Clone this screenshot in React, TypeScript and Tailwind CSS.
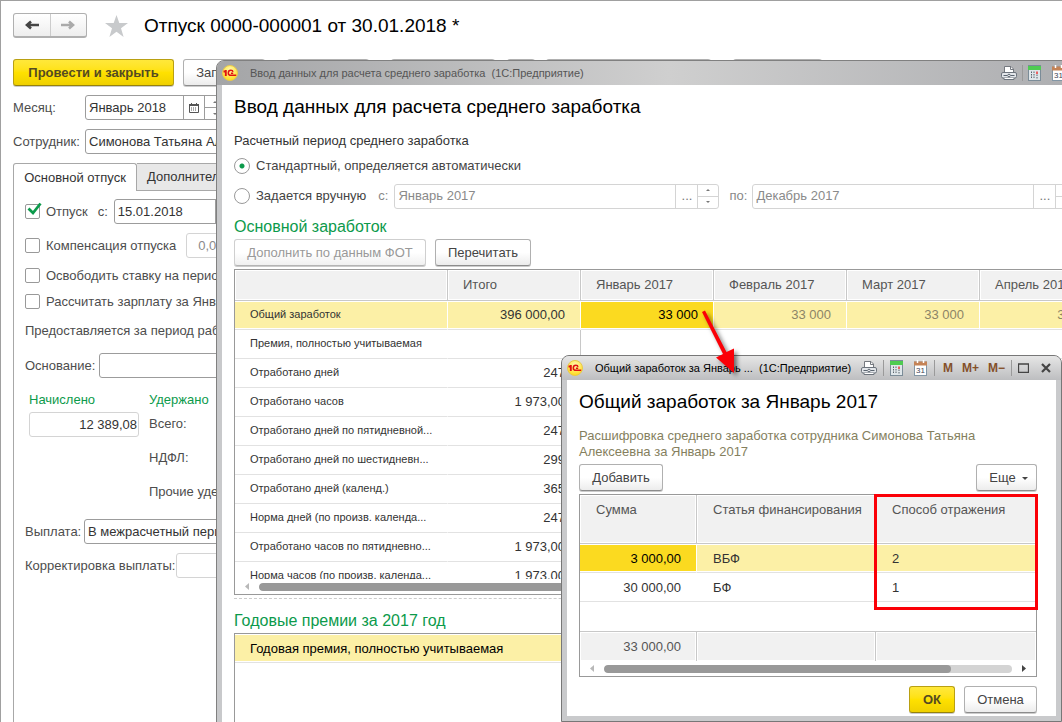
import React from 'react';

type FieldProps = {
  id: string;
  label?: string;
  value: string;
  className?: string;
  inputClassName?: string;
  disabled?: boolean;
  children?: React.ReactNode;
};

// Text box with optional trailing buttons inside the same frame
const Field = ({ id, label, value, className = '', inputClassName = '', disabled, children }: FieldProps) => (
  <div
    className={`flex h-[25px] shrink-0 overflow-hidden rounded-[3px] border bg-white ${
      disabled ? 'border-[#d4d4d4] text-[#8a8a8a]' : 'border-[#9c9c9c] text-[#333]'
    } ${className}`}
  >
    <input
      id={id}
      aria-label={label}
      defaultValue={value}
      readOnly={disabled}
      className={`min-w-0 flex-1 bg-transparent px-[3px] outline-none ${inputClassName}`}
    />
    {children}
  </div>
);

const Spinner = ({ light }: { light?: boolean }) => (
  <span className={`flex w-[21px] flex-col border-l ${light ? 'border-[#d4d4d4]' : 'border-[#9c9c9c]'}`}>
    <button aria-label="Больше" className={`flex flex-1 items-center justify-center border-b ${light ? 'border-[#d4d4d4]' : 'border-[#9c9c9c]'}`}>
      <svg width="4" height="2" viewBox="0 0 4 2"><path d="M0 2 2 0l2 2z" fill="#777" /></svg>
    </button>
    <button aria-label="Меньше" className="flex flex-1 items-center justify-center">
      <svg width="4" height="2" viewBox="0 0 4 2"><path d="M0 0l2 2 2-2z" fill="#777" /></svg>
    </button>
  </span>
);

const PickButton = () => (
  <button className="w-[22px] border-l border-[#d4d4d4] text-[#777]">...</button>
);

type ButtonProps = { children?: React.ReactNode; label?: string; primary?: boolean; disabled?: boolean; className?: string };

const Button = ({ children, label, primary, disabled, className = '' }: ButtonProps) => {
  let look = 'border-[#b0b0b0] border-b-[#8c8c8c] bg-linear-to-b from-white from-50% to-[#ececec] text-[#444]';
  if (primary) look = 'border-[#b9a012] border-b-[#96820c] bg-linear-to-b from-[#ffe83a] via-[#ffe100] to-[#efd000] font-bold text-[#544a22]';
  if (disabled) look = 'border-[#cfcfcf] border-b-[#b4b4b4] bg-linear-to-b from-white from-50% to-[#f0f0f0] text-[#999]';
  return (
    <button
      disabled={disabled}
      aria-label={label}
      className={`flex h-[27px] shrink-0 items-center justify-center rounded-[3px] border pt-px whitespace-nowrap shadow-[0_1px_0_#ccc] ${look} ${className}`}
    >
      {children}
    </button>
  );
};

const CheckBox = ({ label, checked }: { label: string; checked?: boolean }) => (
  <label className="flex shrink-0 items-center gap-1.5 whitespace-nowrap">
    <span className="relative flex size-[15px]">
      <input
        type="checkbox"
        defaultChecked={checked}
        className="size-[15px] appearance-none rounded-[2px] border border-[#999] bg-white"
      />
      {checked && (
        <svg className="pointer-events-none absolute -top-0.5 left-0.5" width="16" height="15" viewBox="0 0 16 15">
          <path d="M1.500 6.500 6 11 13.500 1.500" fill="none" stroke="#0c9a4b" strokeWidth="2.800" />
        </svg>
      )}
    </span>
    {label}
  </label>
);

const Radio = ({ label, checked }: { label: string; checked?: boolean }) => (
  <label className="flex shrink-0 items-center gap-1.5 whitespace-nowrap text-[#444]">
    <input
      type="radio"
      name="period"
      defaultChecked={checked}
      className="size-4 appearance-none rounded-full border border-[#999] bg-white checked:bg-[radial-gradient(circle,#0c9a4b_2px,#fff_3px)]"
    />
    {label}
  </label>
);

const Logo = () => (
  <svg className="shrink-0" width="16" height="16" viewBox="0 0 16 16">
    <defs>
      <radialGradient id="sun" cx="0.5" cy="0.3" r="0.7">
        <stop offset="0" stopColor="#fffbb0" />
        <stop offset="1" stopColor="#ffd91a" />
      </radialGradient>
    </defs>
    <circle cx="8" cy="8" r="7.500" fill="url(#sun)" stroke="#e8c84a" />
    <path d="M1.500 6.500h1.800M3.800 5v6" fill="none" stroke="#e01010" strokeWidth="1.900" />
    <path d="M11 6.900C10.800 5.800 9.900 5.300 8.900 5.300 7.300 5.300 6.300 6.500 6.300 7.900 6.300 9.400 7.400 10.300 8.900 10.300H14.200M11.200 8.300H8.900" fill="none" stroke="#e01010" strokeWidth="1.500" />
  </svg>
);

const PrintIcon = () => (
  <svg width="16" height="16" viewBox="0 0 16 16">
    <path d="M3.500 8V1.500H10L12.500 4v4" fill="#fff" stroke="#75797f" />
    <path d="M9.500 1.500V4.500h3" fill="none" stroke="#75797f" />
    <rect x="0.500" y="7.500" width="15" height="5.500" rx="1.500" fill="#e3e6ea" stroke="#6d747d" />
    <path d="M2.500 10.500h4M9.500 10.500h4" stroke="#5b6570" />
    <circle cx="8" cy="10.500" r="1.300" fill="#fff" stroke="#5b6570" />
    <path d="M3 13v1.500h10V13" fill="#fff" stroke="#6d747d" />
  </svg>
);

const CalculatorIcon = () => (
  <svg width="13" height="16" viewBox="0 0 13 16">
    <rect x="0.500" y="0.500" width="12" height="15" fill="#dfe6ea" stroke="#7b8c98" />
    <rect x="0" y="1" width="13" height="4" fill="#4fcb52" />
    <path d="M3.500 6.500v7M6 6.500v7" stroke="#59636b" strokeDasharray="1.500 1" />
    <path d="M9 6.500v2.500" stroke="#e33" strokeWidth="1.500" />
    <path d="M9 9.500v4" stroke="#59636b" strokeDasharray="1.500 1" />
  </svg>
);

const CalendarIcon = () => (
  <svg width="14" height="16" viewBox="0 0 14 16">
    <rect x="0.500" y="2" width="12" height="13.500" fill="#fff" stroke="#8296a5" />
    <rect x="0" y="1.500" width="13" height="4" fill="#c58356" />
    <path d="M3.500 0v3M9.500 0v3" stroke="#fff" strokeWidth="1.500" />
    <text x="6.500" y="13" textAnchor="middle" fontSize="8" fill="#445">31</text>
  </svg>
);

const Divider = () => <span className="h-4 w-px bg-[#9a9a9a]" />;

const ScrollBar = ({ children }: { children: React.ReactNode }) => (
  <div className="flex h-[15px] items-center gap-2.5 px-2.5">
    <svg width="4" height="7" viewBox="0 0 4 7"><path d="M4 0v7L0 3.500z" fill="#b8b8b8" /></svg>
    <div className="h-2 flex-1 overflow-hidden rounded-full bg-[#d4d4d4]">{children}</div>
    <svg width="4" height="7" viewBox="0 0 4 7"><path d="M0 0v7l4-3.500z" fill="#444" /></svg>
  </div>
);

const months = ['Январь 2017', 'Февраль 2017', 'Март 2017', 'Апрель 2017'];

const earnings = [
  ['Общий заработок', '396 000,00'],
  ['Премия, полностью учитываемая', ''],
  ['Отработано дней', '247'],
  ['Отработано часов', '1 973,00'],
  ['Отработано дней по пятидневной...', '247'],
  ['Отработано дней по шестидневн...', '299'],
  ['Отработано дней (календ.)', '365'],
  ['Норма дней (по произв. календа...', '247'],
  ['Отработано часов по пятидневно...', '1 973,00'],
  ['Норма часов (по произв. календа...', '1 973,00'],
];

const VacationForm = () => (
  <main className="h-full border-t border-l border-[#a0a0a0] pt-3 pl-3 text-[#4d4d4d]">
    <header className="flex h-[25px] items-center">
      <div className="flex h-[25px] w-[74px] rounded-[3px] border border-b-2 border-[#b0b0b0] bg-linear-to-b from-white to-[#eee]">
        <button aria-label="Назад" className="flex flex-1 items-center justify-center border-r border-[#ccc]">
          <svg width="14" height="12" viewBox="0 0 14 12"><path d="M14 6H3M6 2.500 2 6l4 3.500" fill="none" stroke="#444" strokeWidth="2.600" /></svg>
        </button>
        <button aria-label="Вперед" className="flex flex-1 items-center justify-center">
          <svg width="14" height="12" viewBox="0 0 14 12"><path d="M0 6h11M8 2.500 12 6 8 9.500" fill="none" stroke="#aaa" strokeWidth="2.600" /></svg>
        </button>
      </div>
      <svg className="ml-[18px]" width="23" height="22" viewBox="0 0 23 22">
        <path d="M11.500 0 14.300 8H23l-7 5.200L18.600 22l-7.100-5.300L4.400 22 7 13.200 0 8h8.700z" fill="#c8cacc" />
      </svg>
      <h1 className="ml-4 text-[19px] whitespace-nowrap text-black">Отпуск 0000-000001 от 30.01.2018 *</h1>
    </header>

    <div className="mt-[21px] flex">
      <Button primary className="w-[161px]">Провести и закрыть</Button>
      <Button className="ml-[9px] w-[82px]">Записать</Button>
      <Button label="Провести" className="ml-[22px] w-[82px]" />
      <Button label="Выплатить" className="ml-[22px] w-[104px]" />
      <Button label="Вложения" className="ml-3 w-7" />
      <Button label="Печать" className="ml-[11px] w-[165px]" />
      <Button label="Еще" className="ml-[22px] w-[89px]" />
    </div>

    <div className="mt-[9px] flex items-center">
      <label htmlFor="month" className="w-[72px]">Месяц:</label>
      <Field id="month" value="Январь 2018" className="w-[141px]">
        <button aria-label="Календарь" className="flex w-[21px] items-center justify-center border-l border-[#9c9c9c]">
          <svg width="10" height="10" viewBox="0 0 10 10">
            <path d="M.5 1.500h9v8h-9z" fill="none" stroke="#555" />
            <path d="M0 2h10" stroke="#555" strokeWidth="2" />
            <path d="M2.500 0v1M7.500 0v1" stroke="#555" />
            <path d="M2 5h6M2 7h6" stroke="#555" strokeDasharray="1 1" />
          </svg>
        </button>
        <Spinner />
      </Field>
    </div>
    <div className="mt-[9px] flex items-center">
      <label htmlFor="employee" className="w-[72px]">Сотрудник:</label>
      <Field id="employee" value="Симонова Татьяна Алексеевна" className="w-[260px]" />
    </div>

    <div className="mt-[9px] flex h-7 text-[#333]">
      <button className="w-[124px] shrink-0 rounded-t-[3px] border border-b-0 border-[#a8a8a8]">Основной отпуск</button>
      <button className="h-7 shrink-0 border border-l-0 border-[#a8a8a8] bg-[#e8e8e8] px-2.5">Дополнительно</button>
    </div>

    <section className="h-full border-l border-[#a8a8a8] pt-2 pl-[11px]">
      <div className="flex h-[25px] items-center">
        <CheckBox label="Отпуск" checked />
        <label htmlFor="from" className="mr-1.5 ml-2.5">с:</label>
        <Field id="from" value="15.01.2018" className="w-[122px]">
          <button aria-label="Выбрать дату" className="w-5 border-l border-[#9c9c9c]" />
        </Field>
      </div>
      <div className="mt-[9px] flex h-[25px] items-center">
        <CheckBox label="Компенсация отпуска" />
        <Field id="compensation" label="Дней компенсации" value="0,00" disabled className="ml-2.5 w-[60px]" inputClassName="pl-[11px]" />
      </div>
      <div className="mt-[5px] flex h-[25px] items-center"><CheckBox label="Освободить ставку на период отпуска" /></div>
      <div className="mt-px flex h-[25px] items-center"><CheckBox label="Рассчитать зарплату за Январь 2018" /></div>
      <p className="mt-[9px] h-[25px] whitespace-nowrap">Предоставляется за период работы</p>
      <div className="mt-[5px] flex items-center">
        <label htmlFor="reason" className="w-[74px]">Основание:</label>
        <Field id="reason" value="" className="w-[220px]" />
      </div>

      <div className="mt-3.5 ml-1 flex h-[109px] gap-2.5">
        <div className="w-[110px]">
          <label htmlFor="accrued" className="block h-5 text-[#0c9a4b]">Начислено</label>
          <Field id="accrued" value="12 389,08" disabled inputClassName="pr-px text-right text-[#333]" />
        </div>
        <div className="whitespace-nowrap">
          <h2 className="h-6 text-[#0c9a4b]">Удержано</h2>
          <p className="h-[34px]">Всего:</p>
          <p className="h-[34px]">НДФЛ:</p>
          <p>Прочие удержания:</p>
        </div>
      </div>

      <div className="mt-[18px] flex items-center">
        <label htmlFor="payout" className="w-[59px]">Выплата:</label>
        <Field id="payout" value="В межрасчетный период" className="w-[240px]" />
      </div>
      <div className="mt-[9px] flex items-center">
        <label htmlFor="correction" className="w-[151px] whitespace-nowrap">Корректировка выплаты:</label>
        <Field id="correction" value="" disabled className="w-[120px]" />
      </div>
    </section>
  </main>
);

const AverageWindow = () => (
  <section className="absolute top-[60px] -right-[60px] -bottom-5 left-[216px] overflow-hidden rounded-t-lg border border-[#808080] bg-[#c8c9cb] pl-[5px]">
    <div className="-ml-[5px] flex h-6 items-center bg-linear-to-r from-[#a4a5a7] via-[#cfcfcf] to-[#a9aaad] pl-[5px] text-[11px] text-[#555]">
      <Logo />
      <span className="ml-3 flex-1 whitespace-nowrap">Ввод данных для расчета среднего заработка&nbsp; (1С:Предприятие)</span>
      <div className="mr-[55px] flex items-center gap-[5px]">
        <PrintIcon />
        <Divider />
        <CalculatorIcon />
        <span className="ml-1.5"><CalendarIcon /></span>
      </div>
    </div>

    <div className="h-full bg-white pt-[11px] pl-3">
      <h1 className="h-[35px] text-[19px] leading-[22px] text-black">Ввод данных для расчета среднего заработка</h1>
      <p className="mt-0.5 h-[21px] text-[#333]">Расчетный период среднего заработка</p>
      <div className="flex h-6 items-center"><Radio label="Стандартный, определяется автоматически" checked /></div>
      <div className="mt-[5px] flex h-[26px] items-center">
        <Radio label="Задается вручную" />
        <label htmlFor="start" className="mr-1.5 ml-3 text-[#888]">с:</label>
        <Field id="start" value="Январь 2017" disabled className="w-[325px]"><PickButton /><Spinner light /></Field>
        <label htmlFor="end" className="mr-[5px] ml-2.5 text-[#888]">по:</label>
        <Field id="end" value="Декабрь 2017" disabled className="w-[325px]"><PickButton /><Spinner light /></Field>
      </div>

      <h2 className="mt-2 h-[22px] text-base leading-5 text-[#0c9a4b]">Основной заработок</h2>
      <div className="flex gap-[9px]">
        <Button disabled className="w-[192px]">Дополнить по данным ФОТ</Button>
        <Button className="w-24">Перечитать</Button>
      </div>

      <div className="mt-[3px] h-[326px] overflow-hidden border border-[#999]">
        <div className="h-[309px] overflow-hidden">
          <table className="w-[878px] table-fixed border-separate border-spacing-0">
            <colgroup>
              <col className="w-[213px]" />
              <col className="w-[133px]" />
              {months.map((m) => <col key={m} className="w-[133px]" />)}
            </colgroup>
            <thead className="text-left text-[#555]">
              <tr className="h-[31px]">
                {['', 'Итого', ...months].map((h) => (
                  <th key={h} className="border-r border-b border-[#c8c8c8] bg-[#f1f1f1] pl-[15px] font-normal shadow-[inset_0_0_0_1px_#fff]">{h}</th>
                ))}
              </tr>
            </thead>
            <tbody className="text-[#333]">
              {earnings.map(([name, total], i) => {
                const edge = i === 0 ? 'border-r-white bg-[#fcf0a6] shadow-[inset_0_1px_0_#fff,inset_0_-1px_0_#fff]' : 'border-r-transparent';
                return (
                  <tr key={name} className="h-[29px]">
                    <td className={`overflow-hidden border-r border-b border-b-[#e2e2e2] pb-0.5 pl-[15px] text-[11px] whitespace-nowrap ${edge}`}>{name}</td>
                    <td className={`border-r border-b border-b-[#e2e2e2] pr-[15px] text-right ${i === 0 ? edge : 'border-r-[#c8c8c8]'}`}>{total}</td>
                    {months.map((m, j) => (
                      <td
                        key={m}
                        className={`border-r border-b border-b-[#e2e2e2] pr-[15px] text-right ${edge} ${
                          i === 0 && j === 0 ? '!bg-[#fbda20] text-black' : 'text-[#8c8566]'
                        }`}
                      >
                        {i === 0 ? '33 000' : ''}
                      </td>
                    ))}
                  </tr>
                );
              })}
            </tbody>
          </table>
        </div>
        <ScrollBar><div className="h-2 w-4/5 rounded-full bg-[#999]" /></ScrollBar>
      </div>
      <div className="mt-[3px] border-t border-dashed border-[#ccc]" />
      <h2 className="mt-3 h-[22px] text-base leading-5 text-[#0c9a4b]">Годовые премии за 2017 год</h2>
      <table className="w-full border-separate border-spacing-0 border border-[#999] text-black">
        <tbody>
          <tr className="h-[29px]">
            <td className="border-b border-[#e2e2e2] bg-[#fcf0a6] pt-0.5 pl-[15px] shadow-[inset_0_1px_0_#fff,inset_0_-1px_0_#fff]">Годовая премия, полностью учитываемая</td>
          </tr>
          <tr className="h-32"><td /></tr>
        </tbody>
      </table>
    </div>
  </section>
);

const DetailWindow = () => (
  <section className="absolute right-0 bottom-0 flex h-[367px] w-[501px] flex-col overflow-hidden rounded-t-lg border border-[#777] bg-[#c9cacc] px-[5px] pb-[5px]">
    <div className="-mx-[5px] flex h-6 shrink-0 items-center bg-linear-to-b from-[#e6e6e6] to-[#bdbec0] px-[5px] text-[11px] text-black">
      <Logo />
      <span className="ml-3 flex-1 whitespace-nowrap">Общий заработок за Январь ...&nbsp; (1С:Предприятие)</span>
      <div className="mr-[5px] flex items-center gap-1.5">
        <PrintIcon />
        <Divider />
        <CalculatorIcon />
        <span className="ml-[5px]"><CalendarIcon /></span>
        <Divider />
        <div className="ml-0.5 flex gap-[9px] text-[12px] font-bold text-[#84502a]">
          <button>M</button>
          <button>M+</button>
          <button>M−</button>
        </div>
        <Divider />
        <button aria-label="Развернуть">
          <svg width="11" height="10" viewBox="0 0 11 10"><path d="M.5 1h10v8.500H.5zM0 1h11" fill="none" stroke="#444" strokeWidth="1.300" /></svg>
        </button>
        <button aria-label="Закрыть" className="ml-1.5">
          <svg width="10" height="10" viewBox="0 0 10 10"><path d="M1 1l8 8M9 1 1 9" stroke="#444" strokeWidth="2.200" /></svg>
        </button>
      </div>
    </div>

    <div className="flex-1 bg-white pt-2.5 pr-[19px] pl-3">
      <h1 className="text-[19px] leading-6 text-black">Общий заработок за Январь 2017</h1>
      <p className="mt-3.5 leading-4 text-[#857f5e]">
        Расшифровка среднего заработка сотрудника Симонова Татьяна
        <br />
        Алексеевна за Январь 2017
      </p>
      <div className="mt-1 flex justify-between">
        <Button className="w-[84px]">Добавить</Button>
        <Button className="w-[61px] gap-1.5 pl-1">
          Еще
          <svg width="6" height="3" viewBox="0 0 6 3"><path d="M0 0h6L3 3z" fill="#444" /></svg>
        </Button>
      </div>

      <div className="relative mt-[3px] border border-[#999]">
        <table className="w-full table-fixed border-separate border-spacing-0 text-[#333]">
          <colgroup>
            <col className="w-[117px]" />
            <col className="w-[179px]" />
            <col />
          </colgroup>
          <thead className="text-left text-[#555]">
            <tr className="h-[49px] align-top">
              {['Сумма', 'Статья финансирования', 'Способ отражения'].map((h) => (
                <th key={h} className="border-r border-b border-[#c8c8c8] bg-[#f1f1f1] pt-[7px] pl-4 font-normal whitespace-nowrap shadow-[inset_0_0_0_1px_#fff] last:border-r-0">{h}</th>
              ))}
            </tr>
          </thead>
          <tbody>
            <tr className="h-[29px] bg-[#fcf0a6]">
              <td className="border-r border-b border-r-white border-b-[#e2e2e2] bg-[#fbda20] pt-0.5 pr-[15px] text-right text-black shadow-[inset_0_1px_0_#fff,inset_0_-1px_0_#fff]">3 000,00</td>
              <td className="border-r border-b border-r-white border-b-[#e2e2e2] pt-0.5 pl-4 shadow-[inset_0_1px_0_#fff,inset_0_-1px_0_#fff]">ВБФ</td>
              <td className="border-b border-[#e2e2e2] pt-0.5 pl-4 shadow-[inset_0_1px_0_#fff,inset_0_-1px_0_#fff]">2</td>
            </tr>
            <tr className="h-[29px]">
              <td className="border-b border-[#e2e2e2] pt-0.5 pr-4 text-right">30 000,00</td>
              <td className="border-b border-[#e2e2e2] pt-0.5 pl-4">БФ</td>
              <td className="border-b border-[#e2e2e2] pt-0.5 pl-4">1</td>
            </tr>
            <tr className="h-[29px]"><td colSpan={3} /></tr>
          </tbody>
          <tfoot className="text-[#555]">
            <tr className="h-[30px]">
              <td className="border-t border-r border-[#c8c8c8] bg-[#f1f1f1] pr-[15px] text-right shadow-[inset_0_0_0_1px_#fff]">33 000,00</td>
              <td className="border-t border-r border-[#c8c8c8] bg-[#f1f1f1] shadow-[inset_0_0_0_1px_#fff]" />
              <td className="border-t border-[#c8c8c8] bg-[#f1f1f1] shadow-[inset_0_0_0_1px_#fff]" />
            </tr>
          </tfoot>
        </table>
        <ScrollBar><div className="h-2 w-[85%] rounded-full bg-[#999]" /></ScrollBar>
        {/* highlighted column */}
        <div className="pointer-events-none absolute -top-px -right-0.5 h-[116px] w-[164px] border-3 border-[#fb0007]" />
      </div>

      <div className="mt-[9px] flex justify-end gap-[9px]">
        <Button primary className="w-[46px]">ОК</Button>
        <Button className="w-[73px]">Отмена</Button>
      </div>
    </div>
  </section>
);

const App = () => (
  <div className="relative h-screen overflow-hidden bg-white font-['Liberation_Sans',Arial,sans-serif] text-[13px] leading-4">
    <VacationForm />
    <AverageWindow />
    <DetailWindow />
    {/* arrow from the cell to its breakdown window */}
    <svg className="pointer-events-none absolute top-[305px] left-[695px] drop-shadow-[3px_3px_2px_rgba(0,0,0,0.5)]" width="50" height="75" viewBox="0 0 50 75">
      <path d="M7 7 10 5.500 31.500 47 39 43.500V68L21 52.500 28 49z" fill="#fb0007" />
    </svg>
  </div>
);

export default App;
